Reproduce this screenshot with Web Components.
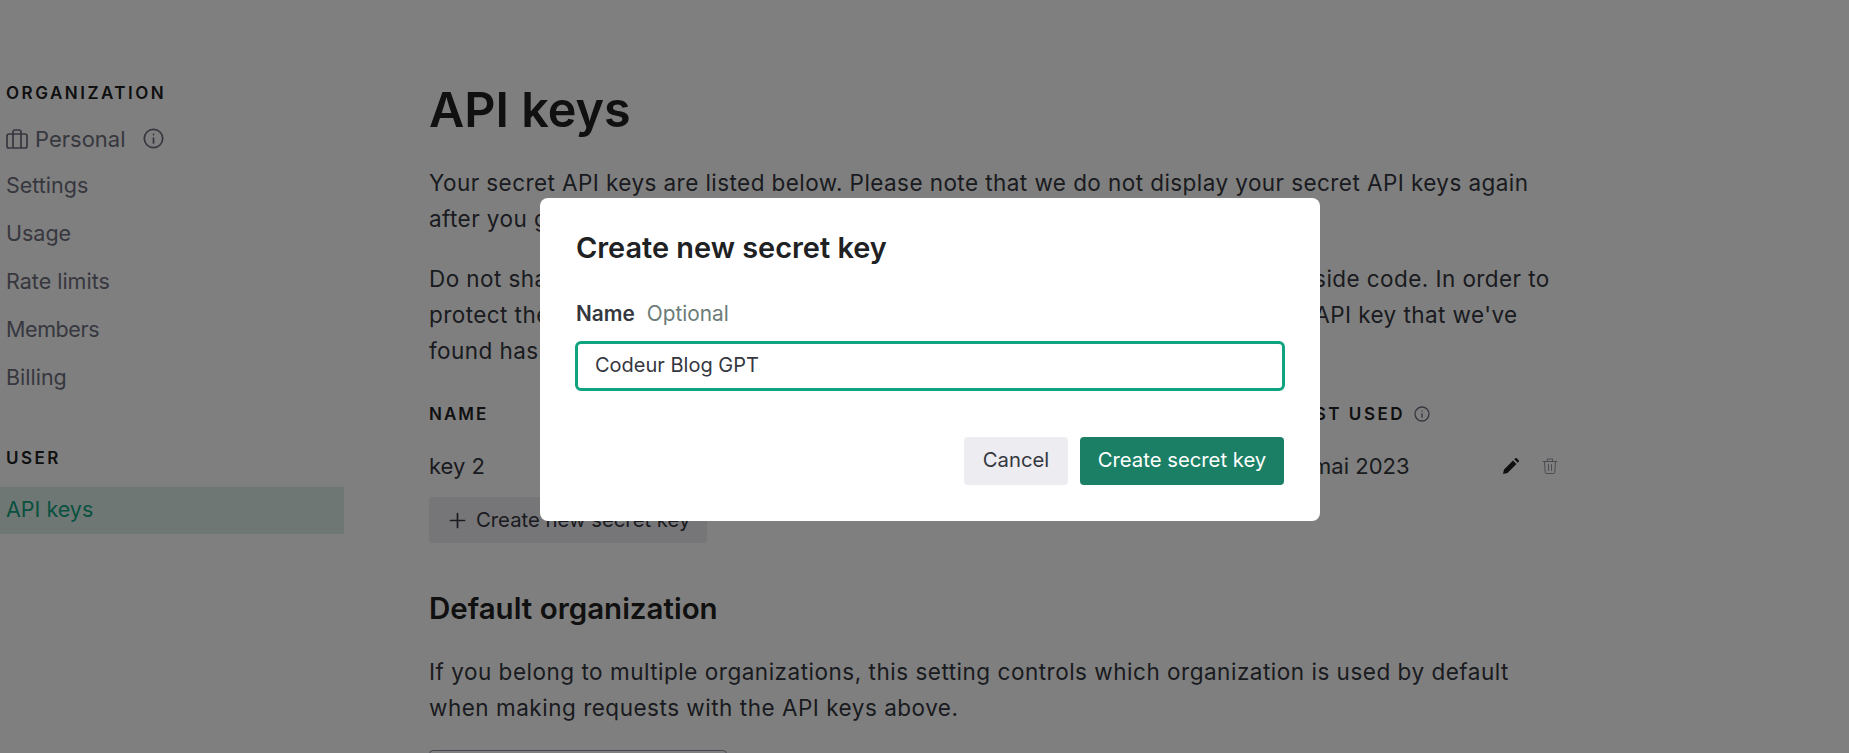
<!DOCTYPE html>
<html lang="fr">
<head>
<meta charset="utf-8">
<title>API keys</title>
<style>
  html, body { margin: 0; height: 100%; overflow: hidden; background: #fff; }
  body { font-family: Inter, "Liberation Sans", sans-serif; color: #353740; }
</style>
</head>
<body>
<app-shell>
  <side-nav slot="nav"></side-nav>
  <keys-page slot="main"></keys-page>
</app-shell>
<secret-modal></secret-modal>

<script>
const INFO = `<svg viewBox="0 0 24 24" fill="none" stroke="currentColor" stroke-width="2" stroke-linecap="round"><circle cx="12" cy="12" r="10.500"/><path d="M12 11.500v5.500M12 7.200v.3"/></svg>`;

class AppShell extends HTMLElement {
  constructor() {
    super();
    this.attachShadow({ mode: "open" }).innerHTML = `
      <style>
        :host { display: flex; height: 753px; overflow: hidden; }
        .nav { flex: 0 0 344px; }
        .main { flex: 1; min-width: 0; }
      </style>
      <div class="nav"><slot name="nav"></slot></div>
      <div class="main"><slot name="main"></slot></div>`;
  }
}
customElements.define("app-shell", AppShell);

class SideNav extends HTMLElement {
  constructor() {
    super();
    this.attachShadow({ mode: "open" }).innerHTML = `
      <style>
        :host { display: block; padding-top: 82px; color: #6e6e80; font-size: 21.500px; }
        h4 { margin: 0; padding-left: 6px; height: 22px; line-height: 22px; font-size: 17px; font-weight: 600;
             letter-spacing: 2.500px; color: #202123; }
        .row { display: flex; align-items: center; height: 48px; padding-left: 6px; }
        .org { height: 45px; margin-top: 12px; font-size: 22px; }
        .org .case { width: 22px; height: 22px; margin-right: 7px; }
        .org .info { width: 21px; height: 21px; margin-left: 17px; }
        .user { margin-top: 46px; }
        .active { margin-top: 18px; height: 47px; box-sizing: border-box; padding-bottom: 3px; background: #dfefeb; color: #10a37f; }
      </style>
      <h4>ORGANIZATION</h4>
      <div class="row org">
        <svg class="case" viewBox="0 0 22 22" fill="none" stroke="currentColor" stroke-width="1.700" stroke-linejoin="round"><rect x="1" y="6" width="20" height="14" rx="2"/><path d="M7 20V4a2 2 0 0 1 2-2h4a2 2 0 0 1 2 2v16"/></svg>
        Personal
        <svg class="info" viewBox="0 0 24 24" fill="none" stroke="currentColor" stroke-width="2" stroke-linecap="round"><circle cx="12" cy="12" r="10.500"/><path d="M12 11.500v5.500M12 7.200v.3"/></svg>
      </div>
      <div class="row">Settings</div>
      <div class="row">Usage</div>
      <div class="row">Rate limits</div>
      <div class="row" style="letter-spacing:-.4px">Members</div>
      <div class="row">Billing</div>
      <h4 class="user">USER</h4>
      <div class="row active">API keys</div>`;
  }
}
customElements.define("side-nav", SideNav);

class KeysPage extends HTMLElement {
  constructor() {
    super();
    this.attachShadow({ mode: "open" }).innerHTML = `
      <style>
        :host { display: block; padding: 78px 0 0 85px; width: 1130px; font-size: 22.500px; letter-spacing: .43px; line-height: 36px; color: #353740; }
        h1 { margin: 0 0 23px; font-size: 48.500px; line-height: 64px; font-weight: 600; letter-spacing: 0; color: #202123; }
        p { margin: 0 0 24px; }
        .tight { letter-spacing: .27px; }
        .loose { letter-spacing: .58px; }
        .last { letter-spacing: .51px; }
        .table { display: grid; grid-template-columns: 859px 222px 1fr; align-items: center; margin-top: 27px; }
        .th { font-size: 17px; font-weight: 600; letter-spacing: 2.500px; color: #202123; height: 36px; display: flex; align-items: center; gap: 9px; white-space: nowrap; }
        .th.first { letter-spacing: 2px; }
        .th svg { width: 16px; height: 16px; color: #6e6e80; }
        .td { height: 56px; display: flex; align-items: center; white-space: nowrap; margin-top: 6px; font-size: 22px; letter-spacing: 0; }
        .acts { gap: 23px; margin-left: -7px; }
        .acts svg { width: 16px; height: 16px; }
        .acts .trash { opacity: .7; }
        .add { display: inline-flex; align-items: center; gap: 10px; height: 46px; width: 278px; box-sizing: border-box; padding-left: 20px;
               background: #ececf1; border-radius: 4px; margin-top: 3px; white-space: nowrap; font-size: 20.300px; letter-spacing: 0; }
        .add svg { width: 17px; height: 17px; }
        h2 { margin: 45px 0 26px; font-size: 29.500px; line-height: 40px; font-weight: 600; letter-spacing: 0; color: #202123; }
        .select { height: 48px; width: 296px; margin-top: 1px; border: 1px solid #8e8ea0; border-radius: 4px; }
      </style>
      <h1>API keys</h1>
      <p>Your secret API keys are listed below. Please note that we do not display your secret API keys again after you generate them.</p>
      <p>Do not share your <span class="tight">API key with others, or expose it in the browser or other client-</span>side code. In order to protect the <span class="loose">security of your account, OpenAI may also automatically rotate any</span> API key that we've found has leaked publicly.</p>
      <div class="table">
        <div class="th first">NAME</div>
        <div class="th">LAST USED ${INFO}</div><div></div>
        <div class="td">key 2</div>
        <div class="td">11 mai 2023</div>
        <div class="td acts">
          <svg viewBox="0 0 16 16" fill="#202123"><path d="M0 16l1-4.500L10 2.500l3.500 3.500L4.500 15zM11.300 1.300l1-1a1 1 0 0 1 1.400 0l2 2a1 1 0 0 1 0 1.400l-1 1z"/></svg>
          <svg class="trash" viewBox="0 0 16 16" fill="none" stroke="#6e6e80" stroke-width="1" stroke-linecap="round" stroke-linejoin="round"><path d="M1 3.500h14M5.500 3.500V1h5v2.500M2.500 3.500l.7 11a1 1 0 0 0 1 1h7.600a1 1 0 0 0 1-1l.7-11M6.500 6.500v6M9.500 6.500v6"/></svg>
        </div>
      </div>
      <div class="add"><svg viewBox="0 0 17 17" stroke="currentColor" stroke-width="1.700" stroke-linecap="round"><path d="M8.500 1.500v14M1.500 8.500h14"/></svg>Create new secret key</div>
      <h2>Default organization</h2>
      <p class="last">If you belong to multiple organizations, this setting controls which organization is used by default when making requests with the API keys above.</p>
      <div class="select"></div>`;
  }
}
customElements.define("keys-page", KeysPage);

class SecretModal extends HTMLElement {
  constructor() {
    super();
    this.attachShadow({ mode: "open" }).innerHTML = `
      <style>
        :host { position: fixed; inset: 0; background: rgba(0,0,0,.5); display: block; }
        .box { position: absolute; left: 540px; top: 198px; width: 780px; height: 323px; box-sizing: border-box;
               padding: 32px 35px 0; background: #fff; border-radius: 8px; display: flex; flex-direction: column; }
        h3 { margin: 0 0 0 1px; font-size: 28.900px; line-height: 36px; font-weight: 600; color: #202123; }
        .label { margin: 35px 0 0 1px; font-size: 20.800px; line-height: 26px; display: flex; gap: 12px; }
        .label b { font-weight: 600; color: #353740; }
        .label span { color: #6b7c78; }
        .input { margin-top: 14px; height: 50px; box-sizing: border-box; border: 3px solid #10a37f; border-radius: 6px;
                 padding-left: 17px; padding-bottom: 2px; display: flex; align-items: center; font-size: 20px; color: #353740; }
        .btns { margin-top: 46px; margin-right: 1px; display: flex; justify-content: flex-end; gap: 12px; }
      </style>
      <div class="box">
        <h3>Create new secret key</h3>
        <div class="label"><b>Name</b><span>Optional</span></div>
        <div class="input">Codeur Blog GPT</div>
        <div class="btns">
          <modal-button style="width:104px">Cancel</modal-button>
          <modal-button primary style="width:204px">Create secret key</modal-button>
        </div>
      </div>`;
  }
}

class ModalButton extends HTMLElement {
  constructor() {
    super();
    this.attachShadow({ mode: "open" }).innerHTML = `
      <style>
        :host { display: flex; align-items: center; justify-content: center; height: 48px; box-sizing: border-box; padding-bottom: 4px; border-radius: 4px;
                background: #ececf1; color: #353740; font-size: 20.300px; white-space: nowrap; }
        :host([primary]) { background: #1a7f64; color: #fff; }
      </style>
      <slot></slot>`;
  }
}
customElements.define("modal-button", ModalButton);
customElements.define("secret-modal", SecretModal);
</script>
</body>
</html>
